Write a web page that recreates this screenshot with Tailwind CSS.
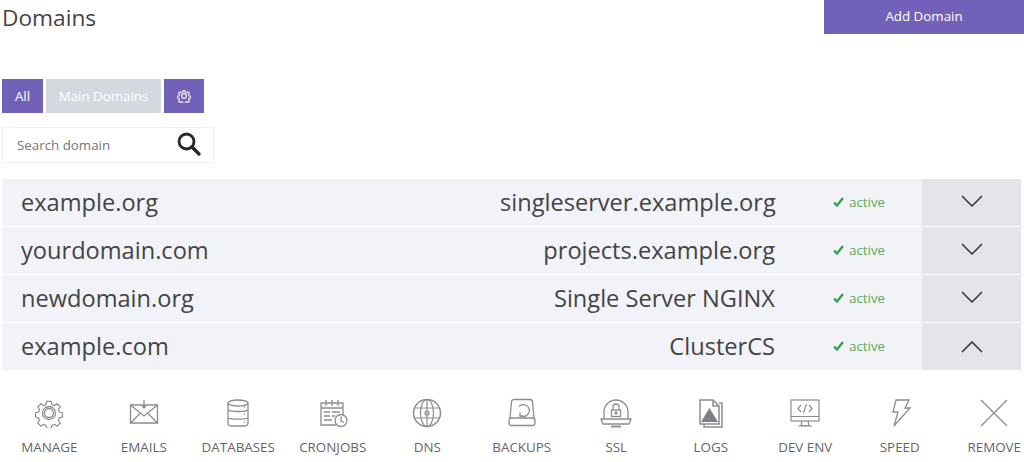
<!DOCTYPE html>
<html lang="en">
<head>
    <meta charset="UTF-8">
    <title>Domains</title>
    <script src="https://cdn.jsdelivr.net/npm/@tailwindcss/browser@4"></script>
</head>
<body class="bg-white font-['Open_Sans',sans-serif] overflow-hidden h-[462px]">
    <!-- Header -->
    <header class="flex justify-between items-start h-[79px] pl-[2px]">
        <h1 class="text-[22.700px] leading-[36px] text-[#444444]">Domains</h1>
        <button class="w-[200px] h-[34px] bg-[#7161b8] text-white text-[13.330px]">Add Domain</button>
    </header>

    <!-- Filters -->
    <div class="flex gap-[3px] pl-[2px] h-[34px] text-[13.330px] text-white">
        <button class="w-[41px] bg-[#7161b8] pt-[1px]">All</button>
        <button class="w-[115px] bg-[#d5d8de] pt-[1px]">Main Domains</button>
        <button class="w-[40px] bg-[#7161b8] flex items-center justify-center">
            <svg width="14" height="14" viewBox="0 0 24 24" fill="none" stroke="#e8e4f8" stroke-width="2.4"><circle cx="12" cy="12" r="4"/><path d="M10 2h4l.6 3 2.2.9 2.6-1.7 2.8 2.8-1.7 2.6.9 2.2 3 .6v4l-3 .6-.9 2.2 1.7 2.6-2.8 2.8-2.6-1.7-2.2.9-.6 3h-4l-.6-3-2.2-.9-2.6 1.700-2.800-2.800 1.700-2.600-.9-2.200-3-.6v-4l3-.6.9-2.200L1.600 7l2.800-2.800L7 5.900l2.200-.9z" transform="translate(1.200 1.200) scale(.9)"/></svg>
        </button>
    </div>

    <!-- Search -->
    <div class="ml-[2px] mt-[14px] w-[212px] h-[36px] border border-[#eef0f6] flex items-center justify-between pl-[14px] pr-[11px]">
        <span class="text-[13.330px] text-[#777777] pt-[1px]">Search domain</span>
        <svg width="26" height="26" viewBox="0 0 26 26" fill="none" stroke="#23272e" class="mb-[2px]"><circle cx="10.500" cy="10.500" r="7.500" stroke-width="2.800"/><path d="M16 16l7 7" stroke-width="3.400" stroke-linecap="round"/></svg>
    </div>

    <!-- Domain rows -->
    <div class="mt-[16px] ml-[2px] w-[1019px] flex flex-col gap-px">
        <div class="flex h-[47px] bg-[#f1f3f8] items-center">
            <div class="w-[498px] pl-[19px] text-[23.600px] text-[#444444]">example.org</div>
            <div class="w-[275px] text-right text-[23.600px] text-[#444444]">singleserver.example.org</div>
            <div class="w-[147px] pl-[58px] flex items-center gap-[5px] text-[13.330px] text-[#5cad5f]">
                <svg width="11" height="10" viewBox="0 0 11 10" fill="none" stroke="#2e9e48" stroke-width="2.200"><path d="M1 5.500l3 3L10 1"/></svg>active
            </div>
            <div class="w-[99px] h-full bg-[#e4e5ea] flex items-center justify-center">
                <svg width="22" height="12" viewBox="0 0 22 12" fill="none" stroke="#333333" stroke-width="1.500" class="mb-[4px]"><path d="M1 1l10 10L21 1"/></svg>
            </div>
        </div>
        <div class="flex h-[47px] bg-[#f1f3f8] items-center">
            <div class="w-[498px] pl-[19px] text-[23.600px] text-[#444444]">yourdomain.com</div>
            <div class="w-[275px] text-right text-[23.600px] text-[#444444]">projects.example.org</div>
            <div class="w-[147px] pl-[58px] flex items-center gap-[5px] text-[13.330px] text-[#5cad5f]">
                <svg width="11" height="10" viewBox="0 0 11 10" fill="none" stroke="#2e9e48" stroke-width="2.200"><path d="M1 5.500l3 3L10 1"/></svg>active
            </div>
            <div class="w-[99px] h-full bg-[#e4e5ea] flex items-center justify-center">
                <svg width="22" height="12" viewBox="0 0 22 12" fill="none" stroke="#333333" stroke-width="1.500" class="mb-[4px]"><path d="M1 1l10 10L21 1"/></svg>
            </div>
        </div>
        <div class="flex h-[47px] bg-[#f1f3f8] items-center">
            <div class="w-[498px] pl-[19px] text-[23.600px] text-[#444444]">newdomain.org</div>
            <div class="w-[275px] text-right text-[23.600px] text-[#444444]">Single Server NGINX</div>
            <div class="w-[147px] pl-[58px] flex items-center gap-[5px] text-[13.330px] text-[#5cad5f]">
                <svg width="11" height="10" viewBox="0 0 11 10" fill="none" stroke="#2e9e48" stroke-width="2.200"><path d="M1 5.500l3 3L10 1"/></svg>active
            </div>
            <div class="w-[99px] h-full bg-[#e4e5ea] flex items-center justify-center">
                <svg width="22" height="12" viewBox="0 0 22 12" fill="none" stroke="#333333" stroke-width="1.500" class="mb-[4px]"><path d="M1 1l10 10L21 1"/></svg>
            </div>
        </div>
        <div class="flex h-[47px] bg-[#f1f3f8] items-center">
            <div class="w-[498px] pl-[19px] text-[23.600px] text-[#444444]">example.com</div>
            <div class="w-[275px] text-right text-[23.600px] text-[#444444]">ClusterCS</div>
            <div class="w-[147px] pl-[58px] flex items-center gap-[5px] text-[13.330px] text-[#5cad5f]">
                <svg width="11" height="10" viewBox="0 0 11 10" fill="none" stroke="#2e9e48" stroke-width="2.200"><path d="M1 5.500l3 3L10 1"/></svg>active
            </div>
            <div class="w-[99px] h-full bg-[#e4e5ea] flex items-center justify-center">
                <svg width="22" height="12" viewBox="0 0 22 12" fill="none" stroke="#333333" stroke-width="1.500" class="mt-[1px]"><path d="M1 11L11 1l10 10"/></svg>
            </div>
        </div>
    </div>

    <!-- Domain actions -->
    <div class="flex pl-[2px] pt-[28px] text-[13.400px] leading-[16px] text-[#666666]">
        <div class="w-[94.5px] shrink-0 flex flex-col items-center gap-[11px]">
            <svg width="30" height="30" viewBox="0 0 30 30" fill="none" stroke="#8a8d91" stroke-width="1.300"><circle cx="15" cy="15" r="6.500"/><circle cx="15" cy="15" r="4.500"/><path d="M12.500 2h5l.8 3.600 2.700 1.100 3.100-2 3.400 3.500-2 3 1.100 2.700 3.400.7v5l-3.400.8-1.100 2.700 2 3-3.400 3.500-3.100-2-2.700 1.100-.8 3.200h-5l-.8-3.200-2.700-1.100-3.100 2-3.400-3.500 2-3-1.100-2.700-3.400-.8v-5l3.400-.7 1.100-2.700-2-3L5.800 4.700l3.100 2 2.700-1.100z" transform="translate(1.500 1.500) scale(.9)"/></svg>
            <span>MANAGE</span>
        </div>
        <div class="w-[94.5px] shrink-0 flex flex-col items-center gap-[11px]">
            <svg width="30" height="30" viewBox="0 0 30 30" fill="none" stroke="#8a8d91" stroke-width="1.300"><path d="M1.500 7h27v18h-27z"/><path d="M1.500 7L15 18 28.500 7M1.500 25l10-10M28.500 25l-10-10"/><path d="M15 2v8M13 8l2 2 2-2"/></svg>
            <span>EMAILS</span>
        </div>
        <div class="w-[94.5px] shrink-0 flex flex-col items-center gap-[11px]">
            <svg width="30" height="30" viewBox="0 0 30 30" fill="none" stroke="#8a8d91" stroke-width="1.300"><ellipse cx="15" cy="5" rx="10" ry="3"/><path d="M5 5v20c0 2 2 3 4 3h12c2 0 4-1 4-3V5M5 12c3 2 17 2 20 0M5 20c3 1.500 17 1.500 20 0"/><path d="M21 9.500h1M21 16h1M21 24h1"/></svg>
            <span>DATABASES</span>
        </div>
        <div class="w-[94.5px] shrink-0 flex flex-col items-center gap-[11px]">
            <svg width="30" height="30" viewBox="0 0 30 30" fill="none" stroke="#8a8d91" stroke-width="1.300"><path d="M18 27H3V5h22v12"/><path d="M8 2v6M14 2v6M20 2v6M3 10h22M6 14h6M14 14h8M6 18h6M14 18h3M6 22h8"/><circle cx="23" cy="22.500" r="6" fill="#ffffff"/><path d="M23 18.500v4.500l3 1.500"/></svg>
            <span>CRONJOBS</span>
        </div>
        <div class="w-[94.5px] shrink-0 flex flex-col items-center gap-[11px]">
            <svg width="30" height="30" viewBox="0 0 30 30" fill="none" stroke="#8a8d91" stroke-width="1.200"><circle cx="15" cy="15" r="13.500" stroke-width="1.500"/><ellipse cx="15" cy="15" rx="6.500" ry="13.500"/><path d="M15 1.500v27M2.500 10h25M2.500 20h25"/><circle cx="15" cy="15" r="2"/></svg>
            <span>DNS</span>
        </div>
        <div class="w-[94.5px] shrink-0 flex flex-col items-center gap-[11px]">
            <svg width="30" height="30" viewBox="0 0 30 30" fill="none" stroke="#8a8d91" stroke-width="1.300"><path d="M3 20L4.500 4c0-1.500 1-2.500 2.500-2.500h16c1.500 0 2.500 1 2.500 2.500L27 20"/><rect x="2" y="20" width="26" height="7.500" rx="2.500"/><path d="M12 8.500a6 6 0 1 1 1 9M13 14.500v3.500h3.500"/></svg>
            <span>BACKUPS</span>
        </div>
        <div class="w-[94.5px] shrink-0 flex flex-col items-center gap-[11px]">
            <svg width="32" height="30" viewBox="0 0 32 30" fill="none" stroke="#8a8d91" stroke-width="1.300"><path d="M4 21v-7a12 12 0 0 1 24 0v7"/><path d="M1 21h30l-2 5H3z"/><path d="M11 28.500h10" stroke-width="1.800"/><rect x="11.500" y="12" width="9" height="6.500"/><path d="M13 12V9a3 3 0 0 1 6 0v3"/><circle cx="16" cy="15" r="1"/></svg>
            <span>SSL</span>
        </div>
        <div class="w-[94.5px] shrink-0 flex flex-col items-center gap-[11px]">
            <svg width="30" height="30" viewBox="0 0 30 30" fill="none" stroke="#8a8d91" stroke-width="1.500"><path d="M4 2h13l6 6v18H4z"/><path d="M17 2v6h6M23 5h3v24H8v-3"/><path d="M13.500 10L22 24H5z" fill="#7d8084" stroke="none"/></svg>
            <span>LOGS</span>
        </div>
        <div class="w-[94.5px] shrink-0 flex flex-col items-center gap-[11px]">
            <svg width="30" height="30" viewBox="0 0 30 30" fill="none" stroke="#8a8d91" stroke-width="1.200"><rect x="1" y="2" width="28" height="21"/><path d="M1 18.500h28M12 23l-1 4.500h8L18 23M8 28h14"/><path d="M11 7l-3 3.500 3 3.500M19 7l3 3.500-3 3.500M16.500 6l-3 9"/></svg>
            <span>DEV ENV</span>
        </div>
        <div class="w-[94.5px] shrink-0 flex flex-col items-center gap-[11px]">
            <svg width="30" height="30" viewBox="0 0 30 30" fill="none" stroke="#8a8d91" stroke-width="1.300"><path d="M11 2h13l-4 8h5L9 28l4-14H8z"/></svg>
            <span>SPEED</span>
        </div>
        <div class="w-[94.5px] shrink-0 flex flex-col items-center gap-[11px]">
            <svg width="30" height="30" viewBox="0 0 30 30" fill="none" stroke="#8a8d91" stroke-width="1.300"><path d="M2 2l26 26M28 2L2 28"/></svg>
            <span>REMOVE</span>
        </div>
    </div>
</body>
</html>
